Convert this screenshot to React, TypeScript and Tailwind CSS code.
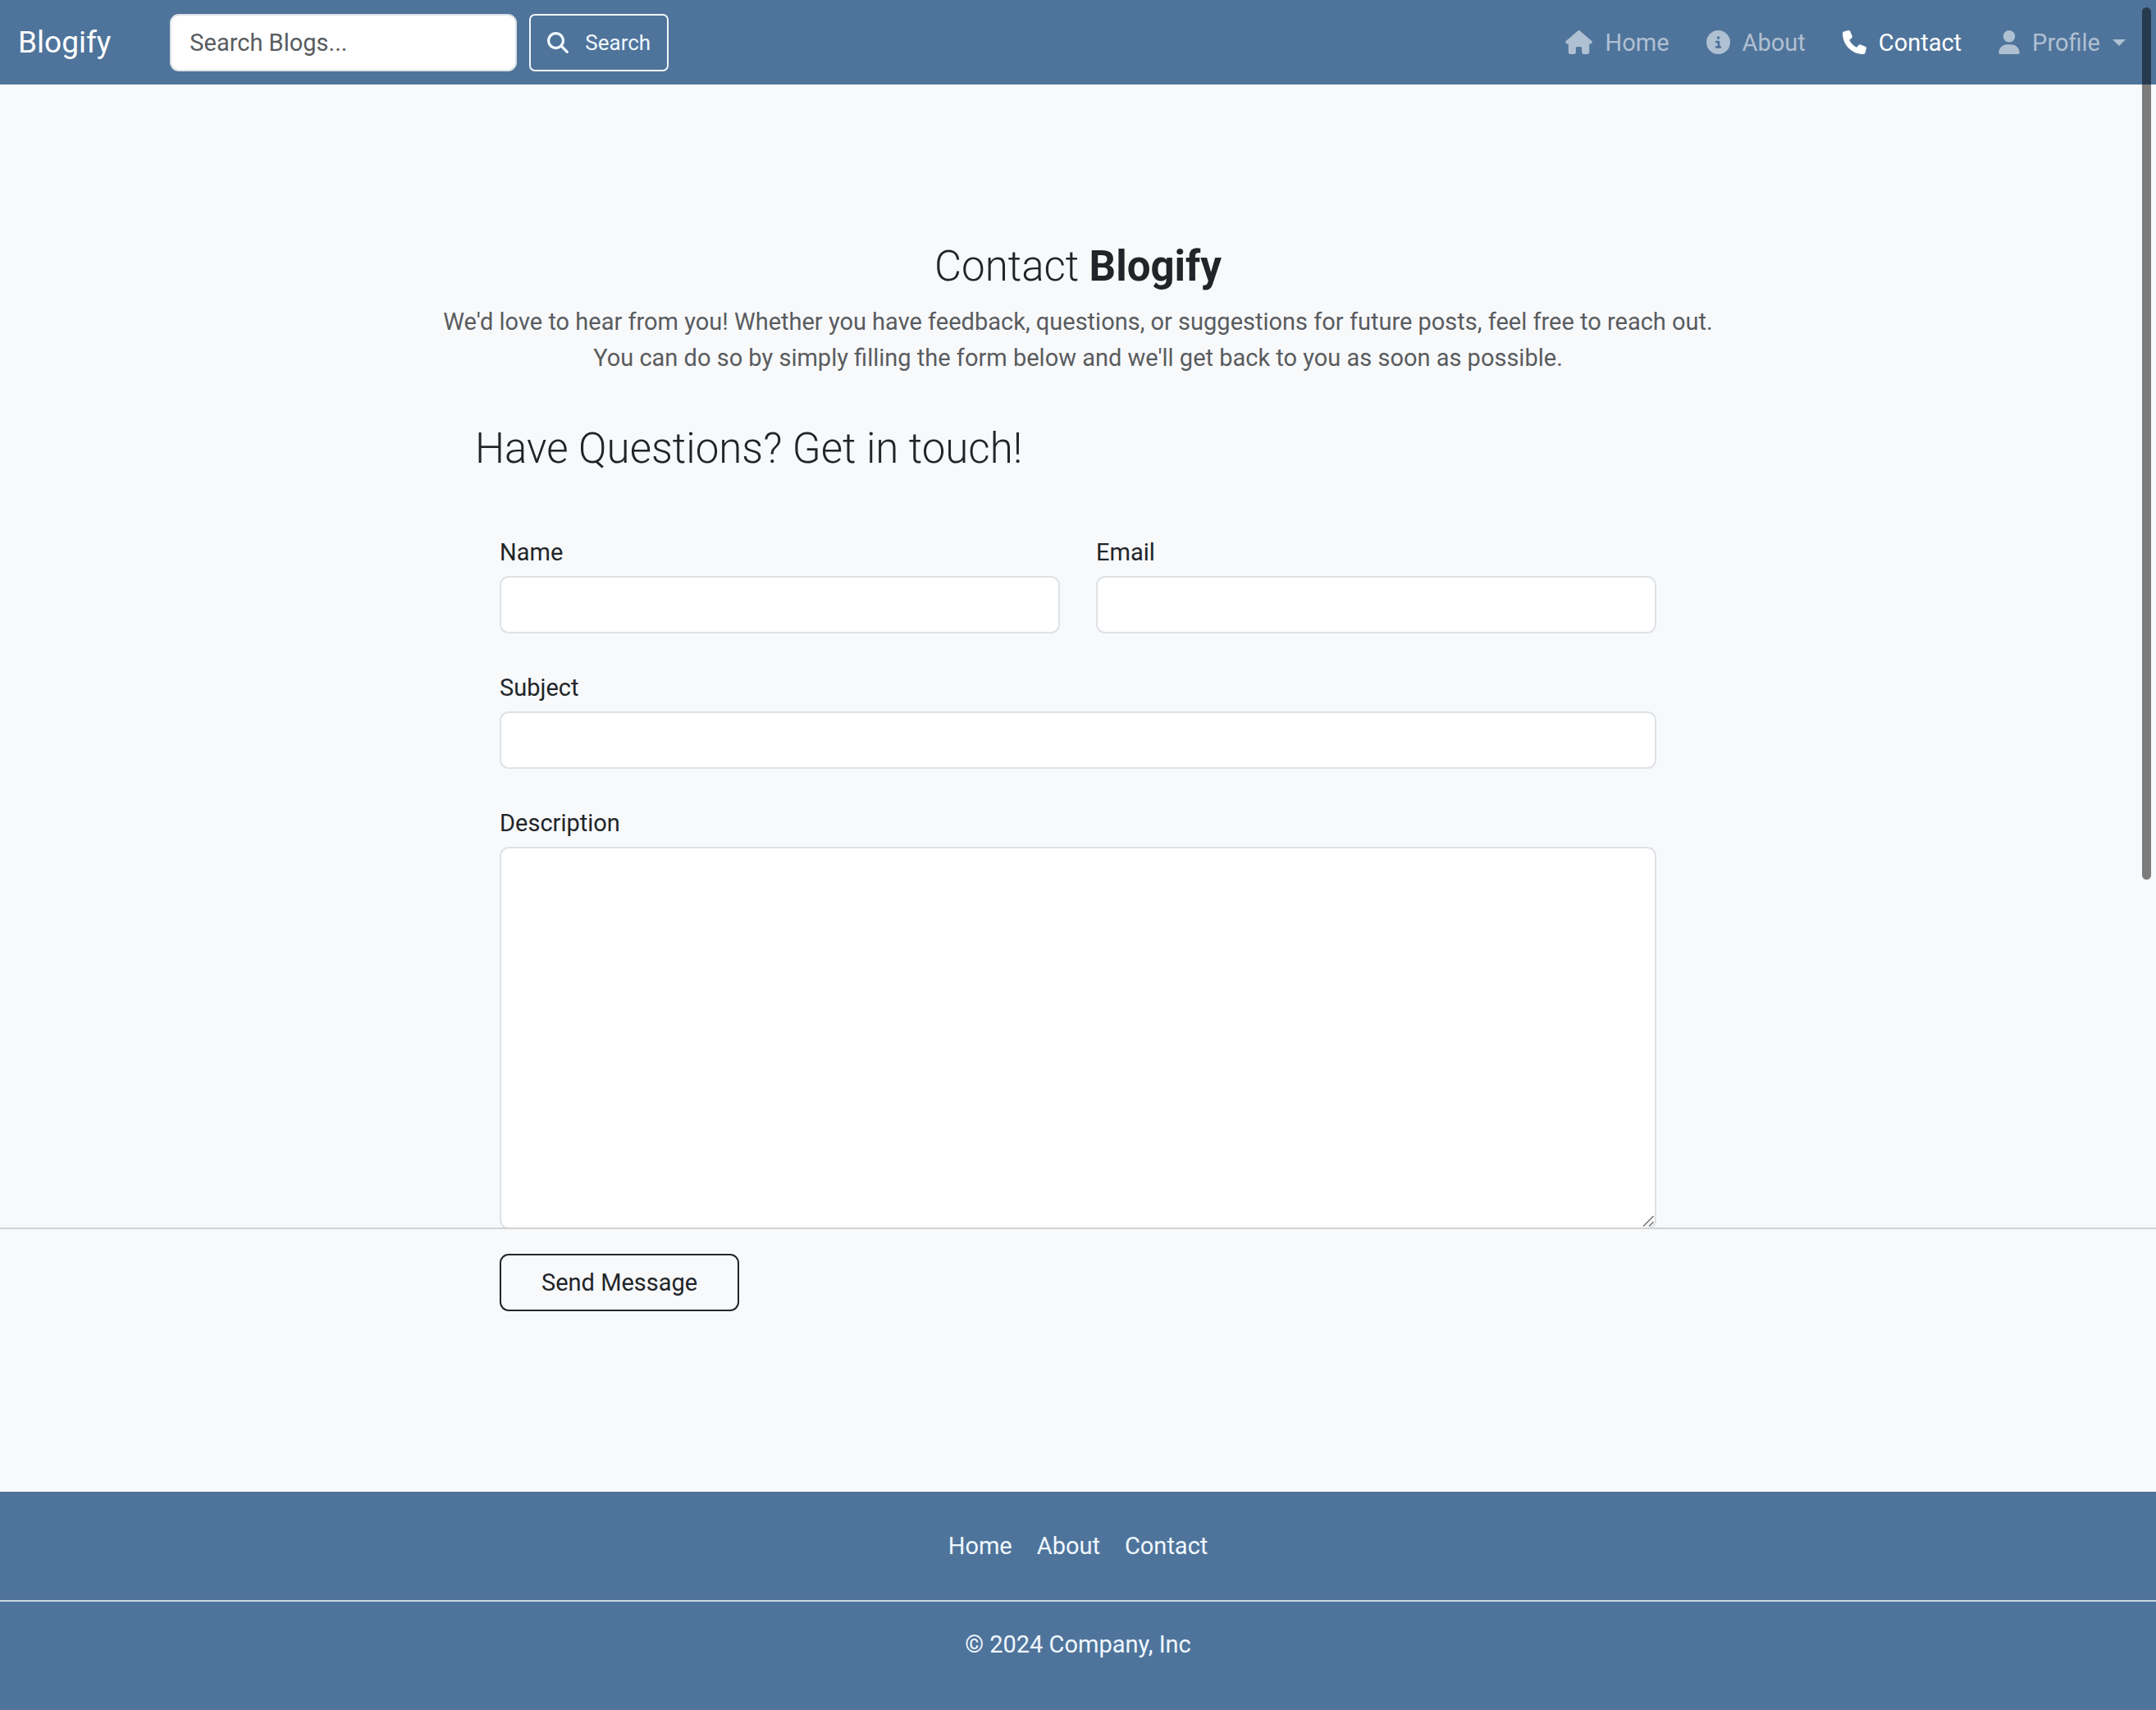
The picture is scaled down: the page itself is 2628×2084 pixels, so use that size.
import React from "react";
import { FaCircleInfo, FaHouse, FaMagnifyingGlass, FaPhone, FaUser } from "react-icons/fa6";
import type { IconType } from "react-icons";

const navItems: { label: string; icon: IconType; iconSize: string; active?: boolean }[] = [
  { label: "Home", icon: FaHouse, iconSize: "h-[29px] w-[33px]" },
  { label: "About", icon: FaCircleInfo, iconSize: "h-[29px] w-[29px]" },
  { label: "Contact", icon: FaPhone, iconSize: "h-[29px] w-[29px]", active: true },
];

const footerLinks = ["Home", "About", "Contact"];

const fieldBox =
  "block w-full rounded-[11px] border-2 border-[#dee2e6] bg-white px-[22px] text-[29px] leading-[44px] text-[#212529] outline-none";

function Field({ id, label, type = "text" }: { id: string; label: string; type?: string }) {
  return (
    <div className="flex flex-col gap-[7px]">
      <label htmlFor={id}>{label}</label>
      <input id={id} type={type} className={`${fieldBox} h-[70px]`} />
    </div>
  );
}

function NavBar() {
  return (
    <header className="flex h-[103px] items-center justify-between bg-[#4f749b] pr-[37px] pl-[22px]">
      <div className="flex items-center">
        <a href="#" className="mr-[72px] text-[37px] text-white">
          Blogify
        </a>
        <form role="search" className="flex gap-[15px]">
          <input
            type="search"
            aria-label="Search Blogs"
            placeholder="Search Blogs..."
            className="h-[70px] w-[423px] rounded-[11px] border-2 border-[#dee2e6] bg-white px-[22px] text-[29px] text-[#212529] outline-none placeholder:text-[#595c5f] placeholder:opacity-100"
          />
          <button
            type="button"
            className="flex h-[70px] items-center gap-5 rounded-[7px] border-2 border-[#f0f8ff] px-5 text-[26px] text-[#f0f8ff]"
          >
            <FaMagnifyingGlass aria-hidden="true" />
            Search
          </button>
        </form>
      </div>
      <nav aria-label="Main" className="flex items-center gap-[45px]">
        {navItems.map(({ label, icon: Icon, iconSize, active }) => (
          <a
            key={label}
            href="#"
            aria-current={active ? "page" : undefined}
            className={active ? "flex items-center gap-[15px] text-white" : "flex items-center gap-[15px] text-[#afc0d2]"}
          >
            <Icon aria-hidden="true" className={iconSize} />
            {label}
          </a>
        ))}
        <button type="button" aria-haspopup="menu" className="flex items-center gap-[15px] text-[#afc0d2]">
          <FaUser aria-hidden="true" className="h-[29px] w-[26px]" />
          Profile
          <svg aria-hidden="true" viewBox="0 0 16 8" className="h-2 w-4 fill-current">
            <path d="M0 0h16L8 8z" />
          </svg>
        </button>
      </nav>
    </header>
  );
}

export default function App() {
  return (
    <div className="relative flex min-h-screen flex-col bg-[#f8f9fb] font-['Roboto',sans-serif] text-[29px] leading-[44px] text-[#212529]">
      <NavBar />
      <main className="pt-[191px] pb-[220px]">
        <div className="text-center">
          <h1 className="text-[51px] leading-[61px] font-light">
            Contact <strong className="font-bold">Blogify</strong>
          </h1>
          <p className="mt-[15px] text-[#595c5f]">
            We'd love to hear from you! Whether you have feedback, questions, or suggestions for future posts, feel
            free to reach out.
            <br />
            You can do so by simply filling the form below and we'll get back to you as soon as possible.
          </p>
        </div>
        <h2 className="mx-auto mt-[58px] w-full max-w-[1470px] text-[51px] leading-[61px] font-light">
          Have Questions? Get in touch!
        </h2>
        <form className="mt-[74px]">
          <div className="mx-auto flex w-full max-w-[1470px] flex-col gap-11 px-[30px]">
            <div className="grid grid-cols-2 gap-11">
              <Field id="name" label="Name" />
              <Field id="email" label="Email" type="email" />
            </div>
            <Field id="subject" label="Subject" />
            <div className="flex flex-col gap-[7px]">
              <label htmlFor="description">Description</label>
              <div className="relative">
                <textarea id="description" className={`${fieldBox} h-[466px] resize-none py-[11px]`} />
                <svg
                  aria-hidden="true"
                  viewBox="0 0 14 14"
                  className="absolute right-[3px] bottom-[3px] h-3.5 w-3.5 stroke-[#6f6f6f]"
                  fill="none"
                  strokeWidth="1.5"
                >
                  <path d="M1 13.500L13.500 1M8 13.500L13.500 8" />
                </svg>
              </div>
            </div>
          </div>
          <hr className="relative -mt-0.5 border-t-2 border-[#d0d2d4]" />
          <div className="mx-auto mt-[30px] w-full max-w-[1470px] px-[30px]">
            <button type="submit" className="h-[70px] rounded-[11px] border-2 border-[#212529] px-[49px]">
              Send Message
            </button>
          </div>
        </form>
      </main>
      <footer className="flex-1 bg-[#4f749b] text-center text-[#f0f8ff]">
        <nav aria-label="Footer" className="flex justify-center gap-[30px] border-b-2 border-[#cdd8e3] pt-11 pb-11">
          {footerLinks.map((label) => (
            <a key={label} href="#">
              {label}
            </a>
          ))}
        </nav>
        <p className="mt-[30px]">© 2024 Company, Inc</p>
      </footer>
      <div
        aria-hidden="true"
        className="absolute top-[9px] right-[6px] h-[1063px] w-[11px] rounded-full bg-black/50"
      />
    </div>
  );
}
